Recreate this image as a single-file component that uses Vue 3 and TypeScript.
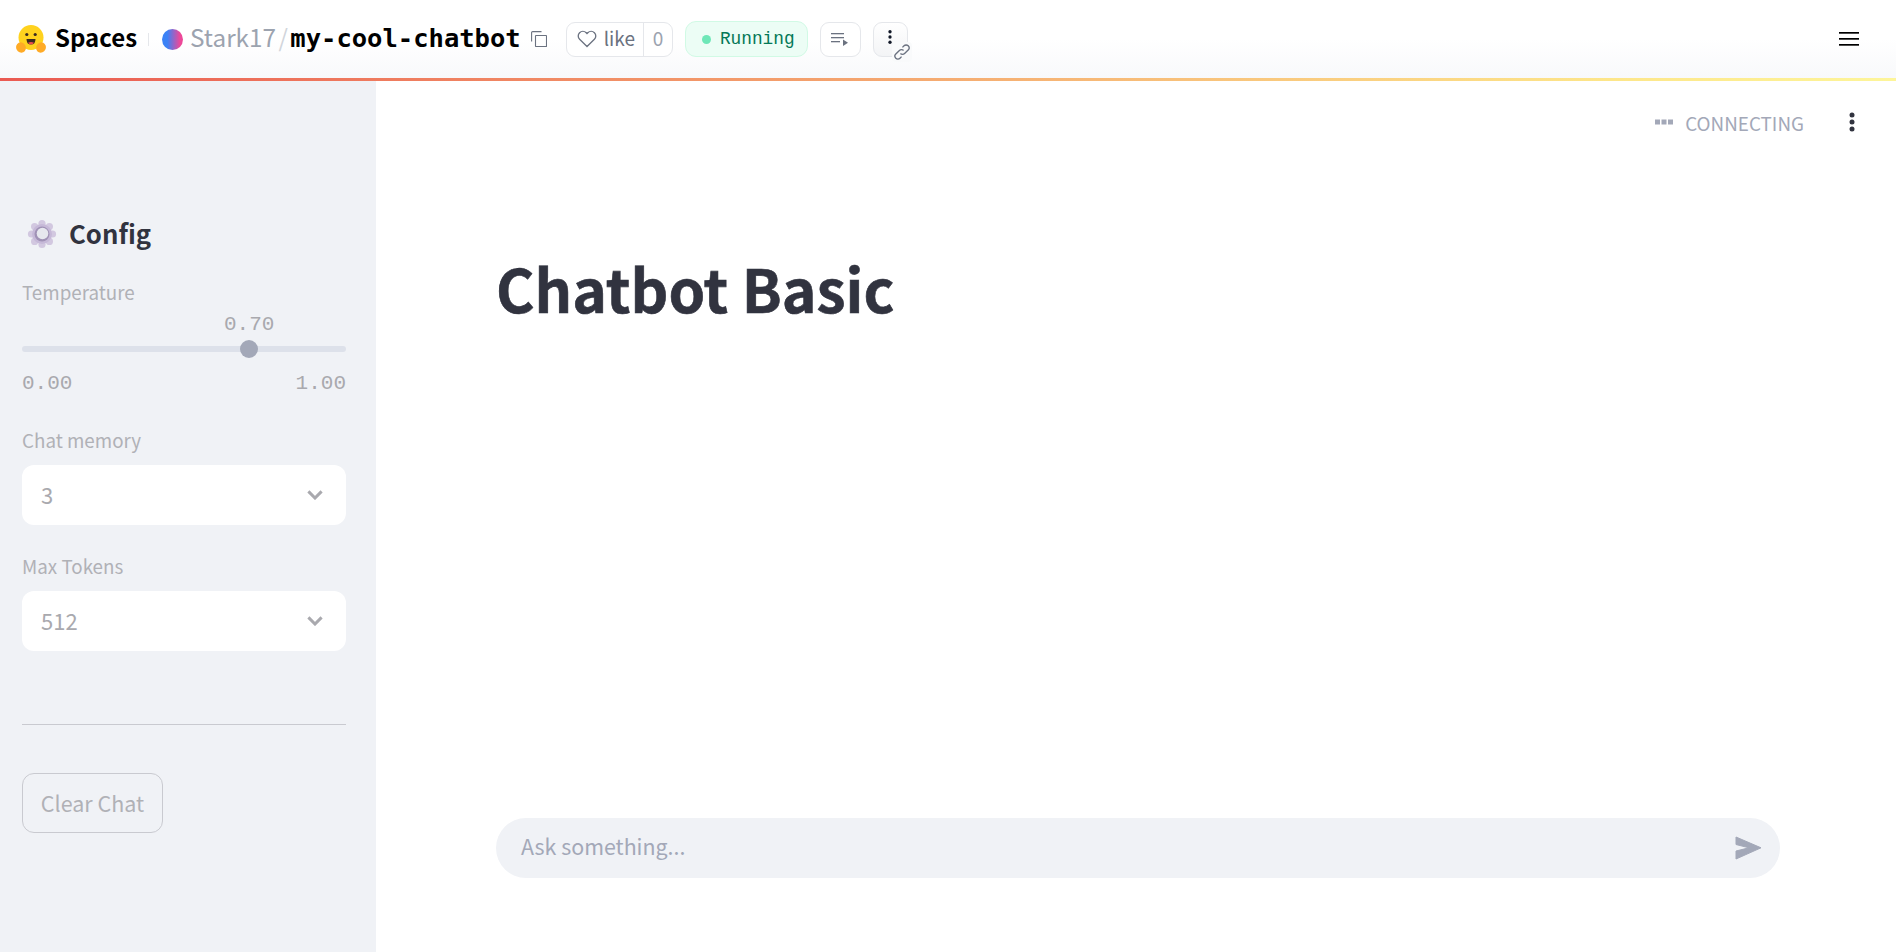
<script setup lang="ts">
const sans = 'x'
void sans
</script>

<template>
  <div class="page">
    <header class="top">
      <svg class="hug" viewBox="0 0 30 30" width="30" height="30">
        <circle cx="15" cy="13.500" r="12.500" fill="#ffd21e" />
        <path d="M10.500 15h9q0 5.500-4.500 5.500t-4.500-5.500z" fill="#3a2a20" />
        <path d="M12 18.800q3-1.600 6 0-1 1.700-3 1.700t-3-1.700z" fill="#ef4e4e" />
        <circle cx="10.800" cy="10.500" r="1.600" fill="#3a2a20" />
        <circle cx="19.200" cy="10.500" r="1.600" fill="#3a2a20" />
        <ellipse cx="5" cy="23.500" rx="4.800" ry="5.300" transform="rotate(-25 5 23.500)" fill="#ffab26" />
        <ellipse cx="25" cy="23.500" rx="4.800" ry="5.300" transform="rotate(25 25 23.500)" fill="#ffab26" />
      </svg>
      <span class="spaces">Spaces</span>
      <span class="tick"></span>
      <span class="avatar"></span>
      <span class="owner">Stark17</span>
      <span class="slash">/</span>
      <span class="repo">my-cool-chatbot</span>
      <svg class="copy" viewBox="0 0 16 16" width="16" height="16" fill="none" stroke="#6b7280" stroke-width="1.100">
        <rect x="4.500" y="4.500" width="11" height="11" rx="0.500" />
        <path d="M10.500 .6H1.600a1 1 0 0 0-1 1v8.900" />
      </svg>
      <div class="like">
        <span class="like-main">
          <svg viewBox="0 0 20 18" width="20" height="18" fill="none" stroke="#6b7280" stroke-width="1.300">
            <path d="M10 16.500 2.600 9.300a4.600 4.600 0 0 1 0-6.600 4.700 4.700 0 0 1 6.600 0l.8.8.8-.8a4.700 4.700 0 0 1 6.600 0 4.600 4.600 0 0 1 0 6.600z" />
          </svg>
          <span class="like-t">like</span>
        </span>
        <span class="like-count">0</span>
      </div>
      <div class="running"><i></i><span>Running</span></div>
      <div class="logs">
        <svg viewBox="0 0 18 16" width="18" height="16" fill="#6b7280">
          <rect x="0" y="2" width="13" height="1.300" />
          <rect x="0" y="6" width="13" height="1.300" />
          <rect x="0" y="10" width="9" height="1.300" />
          <path d="M12 8.500l5 3.200-5 3.300z" />
        </svg>
      </div>
      <div class="more">
        <svg viewBox="0 0 4 16" width="4" height="14" fill="#111827">
          <circle cx="2" cy="2" r="1.900" /><circle cx="2" cy="8" r="1.900" /><circle cx="2" cy="14" r="1.900" />
        </svg>
        <span class="clip">
          <svg viewBox="0 0 16 16" width="18" height="18" fill="none" stroke="#6b7280" stroke-width="1.200">
            <path d="M6.600 9.400a2.600 2.600 0 0 0 3.700 0l3.200-3.200a2.600 2.600 0 0 0-3.700-3.700L8.400 3.900" />
            <path d="M9.400 6.600a2.600 2.600 0 0 0-3.700 0l-3.200 3.200a2.600 2.600 0 0 0 3.700 3.700l1.400-1.400" />
          </svg>
        </span>
      </div>
      <svg class="burger" viewBox="0 0 20 14" width="20" height="14" fill="#000">
        <rect y="0" width="20" height="1.700" /><rect y="6" width="20" height="1.700" /><rect y="12" width="20" height="1.700" />
      </svg>
    </header>
    <div class="rainbow"></div>
    <div class="body">
      <aside class="side">
        <div class="config">
          <svg viewBox="0 0 30 30" width="30" height="30">
            <g fill="#d2c8e0">
              <circle cx="15" cy="4.500" r="3.600" /><circle cx="15" cy="25.500" r="3.600" />
              <circle cx="4.500" cy="15" r="3.600" /><circle cx="25.500" cy="15" r="3.600" />
              <circle cx="7.600" cy="7.600" r="3.600" /><circle cx="22.400" cy="7.600" r="3.600" />
              <circle cx="7.600" cy="22.400" r="3.600" /><circle cx="22.400" cy="22.400" r="3.600" />
            </g>
            <circle cx="15" cy="15" r="10" fill="#c6b9d8" />
            <circle cx="15" cy="15" r="7.500" fill="#a092b6" />
            <circle cx="15.500" cy="14.500" r="5.800" fill="#e6e7ee" />
          </svg>
          <h2>Config</h2>
        </div>
        <label class="lab temp">Temperature</label>
        <div class="slider">
          <div class="val">0.70</div>
          <div class="track"><span class="thumb"></span></div>
          <div class="ends"><span>0.00</span><span>1.00</span></div>
        </div>
        <label class="lab mem">Chat memory</label>
        <div class="select"><span>3</span>
          <svg viewBox="0 0 16 10" width="16" height="10" fill="none" stroke="#a9a9ae" stroke-width="3"><path d="M1.400 1.400 8 8l6.600-6.600" /></svg>
        </div>
        <label class="lab tok">Max Tokens</label>
        <div class="select"><span>512</span>
          <svg viewBox="0 0 16 10" width="16" height="10" fill="none" stroke="#a9a9ae" stroke-width="3"><path d="M1.400 1.400 8 8l6.600-6.600" /></svg>
        </div>
        <hr />
        <button class="clear" type="button">Clear Chat</button>
      </aside>
      <main class="main">
        <div class="status">
          <svg viewBox="0 0 18 6" width="18" height="6" fill="#a3a8b8"><rect width="5" height="5" y=".5" /><rect x="6.500" width="5" height="5" y=".5" /><rect x="13" width="5" height="5" y=".5" /></svg>
          <span class="conn">CONNECTING</span>
          <svg class="kebab" viewBox="0 0 6 20" width="6" height="20" fill="#31333f">
            <circle cx="3" cy="3" r="2.500" /><circle cx="3" cy="10" r="2.500" /><circle cx="3" cy="17" r="2.500" />
          </svg>
        </div>
        <div class="content">
          <h1>Chatbot Basic</h1>
          <div class="chat">
            <span class="ask">Ask something...</span>
            <svg viewBox="0 0 27 24" width="27" height="24" fill="#a3a8b8"><path d="M1 1 26 11.800 1 23V15L14 11.800 1 8.500z" stroke="#a3a8b8" stroke-linejoin="round" /></svg>
          </div>
        </div>
      </main>
    </div>
  </div>
</template>

<style>
html, body { margin: 0; background: #fff; }
</style>

<style scoped>
.page { height: 952px; display: flex; flex-direction: column; overflow: hidden; font-family: "Noto Sans CJK SC", "Noto Sans", sans-serif; color: #31333f; }
.top { height: 78px; flex: none; display: flex; align-items: center; padding: 0 37px 0 16px; box-sizing: border-box; background: linear-gradient(#fff 50%, #f8f9fb); }
.hug { margin-right: 9px; }
.spaces { font-size: 24px; font-weight: 700; color: #000; margin: 0 11px 5px 0; }
.tick { width: 1px; height: 13px; background: #e5e7eb; margin-right: 13px; }
.avatar { width: 21px; height: 21px; border-radius: 50%; background: linear-gradient(90deg, #3b82f6 25%, #ec4899 85%); margin-right: 7px; }
.owner { font-size: 24.300px; color: #9ca3af; margin-bottom: 5px; }
.slash { font-size: 24px; color: #d1d5db; margin: 0 2.500px 5px; }
.repo { font-family: "DejaVu Sans Mono", monospace; font-size: 25.500px; font-weight: 700; color: #000; margin: 0 10px 2px 0; }
.copy { margin-right: 19px; }
.like { display: flex; height: 35px; box-sizing: border-box; border: 1px solid #e5e7eb; border-radius: 9px; background: #fff; margin-right: 12px; align-items: center; }
.like-main { display: flex; align-items: center; gap: 7px; padding: 0 8px 0 10px; height: 100%; border-right: 1px solid #e5e7eb; font-size: 19px; color: #6b7280; }
.like-t { margin-bottom: 3px; }
.like-count { font-size: 19px; color: #9ca3af; width: 28px; text-align: center; margin-bottom: 3px; }
.running { display: flex; align-items: center; height: 36px; width: 123px; box-sizing: border-box; padding-left: 16px; border: 1px solid #d1fae5; border-radius: 11px; background: #ecfdf5; color: #047857; font-family: "Liberation Mono", monospace; font-size: 17.800px; margin-right: 12px; }
.running i { width: 9px; height: 9px; border-radius: 50%; background: #6ee7b7; margin-right: 9px; }
.running span { margin-bottom: 1px; }
.logs { width: 41px; height: 35px; box-sizing: border-box; border: 1px solid #e5e7eb; border-radius: 9px; background: #fff; display: flex; align-items: center; justify-content: center; margin-right: 12px; }
.more { width: 35px; height: 35px; box-sizing: border-box; border: 1px solid #e5e7eb; border-radius: 9px; background: linear-gradient(#fff, #f3f4f6); display: flex; align-items: center; justify-content: center; position: relative; padding-bottom: 4px; }
.clip { position: absolute; left: 18px; top: 19px; width: 20px; height: 20px; display: flex; align-items: center; justify-content: center; background: #f9fafb; border-radius: 4px; }
.burger { margin-left: auto; }
.rainbow { height: 3px; flex: none; background: linear-gradient(90deg, #ea5a52, #f39c6b 40%, #fde68a 85%, #fdf59a); }
.body { flex: 1; display: flex; min-height: 0; }
.side { width: 376px; flex: none; box-sizing: border-box; background: #f0f2f6; padding: 130px 30px 0 22px; display: flex; flex-direction: column; align-items: stretch; }
.config { display: flex; align-items: center; height: 46px; gap: 12px; margin-left: 5px; }
.config h2 { margin: 0 0 4px; font-size: 25.700px; font-weight: 600; color: #31333f; }
.lab { font-size: 18.800px; line-height: 26px; color: #b0b1b6; }
.temp { margin-top: 22px; }
.slider { font-family: "Liberation Mono", monospace; font-size: 21px; color: #a9a9ae; }
.val { padding-left: 202px; height: 24px; line-height: 24px; margin-top: 8px; }
.track { height: 6px; border-radius: 3px; background: #dde1ea; position: relative; margin-top: 9px; }
.thumb { position: absolute; left: 218px; top: -6px; width: 18px; height: 18px; border-radius: 50%; background: #a3a8b8; }
.ends { display: flex; justify-content: space-between; margin-top: 20px; line-height: 24px; }
.mem { margin-top: 31px; }
.tok { margin-top: 28px; }
.select { height: 60px; border-radius: 12px; background: #fff; margin-top: 12px; display: flex; align-items: center; justify-content: space-between; padding: 0 23px 0 19px; font-size: 22px; color: #a9a9ae; }
.select span { margin-bottom: 2px; }
hr { width: 100%; height: 1px; border: 0; background: #c9cad0; margin: 73px 0 48px; }
.clear { align-self: flex-start; width: 141px; height: 60px; box-sizing: border-box; border: 1px solid #c9cad0; border-radius: 12px; background: transparent; font-family: inherit; font-size: 21.500px; color: #b0b1b6; padding: 0 0 2px; }
.main { flex: 1; min-width: 0; display: flex; flex-direction: column; }
.status { height: 82px; flex: none; box-sizing: border-box; padding: 0 41px 0 0; display: flex; align-items: center; justify-content: flex-end; color: #a3a8b8; font-size: 18.850px; }
.conn { margin-left: 12px; margin-right: 45px; }
.content { padding: 0 116px 0 120px; display: flex; flex-direction: column; }
h1 { margin: 0; padding-top: 85px; font-size: 58.800px; line-height: 80px; font-weight: 700; color: #31333f; -webkit-text-stroke: 0.6px #31333f; }
.chat { margin-top: 490px; height: 60px; border-radius: 30px; background: #f0f2f6; display: flex; align-items: center; justify-content: space-between; padding: 0 18px 0 25px; font-size: 21.400px; color: #a3a8b8; }
.ask { margin-bottom: 5px; }
</style>
